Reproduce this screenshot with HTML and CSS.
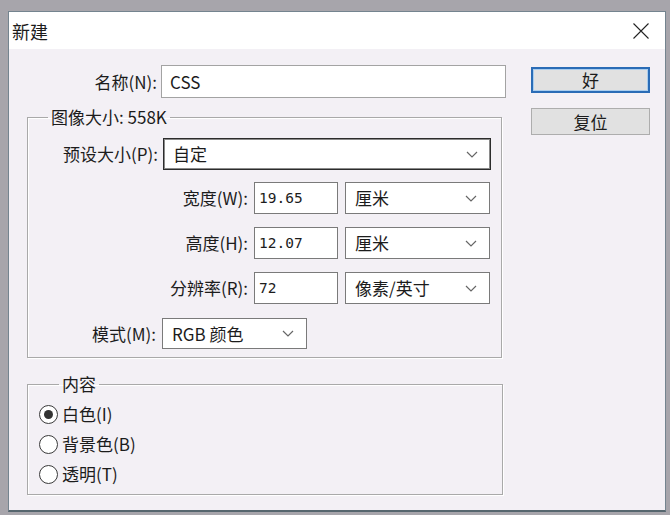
FILE: index.html
```html
<!DOCTYPE html>
<html lang="zh">
<head>
<meta charset="utf-8">
<title>新建</title>
<link rel="stylesheet" href="styles.css">
</head>
<body>
<div class="page">
  <div class="win">
    <div class="titlebar">
      <span class="title">新建</span>
      <svg class="close" width="16" height="16" viewBox="0 0 16 16"><path d="M0.5 0.5 L15.5 15.5 M15.5 0.5 L0.5 15.5" stroke="#222" stroke-width="1.1" fill="none"/></svg>
    </div>
    <div class="content">
      <div class="form">
        <div class="row name-row">
          <label class="lbl lbl-name">名称(N):</label>
          <div class="field name-field">CSS</div>
        </div>

        <fieldset class="group group-size">
          <legend>图像大小: 558K</legend>
          <div class="row preset-row">
            <label class="lbl lbl-preset">预设大小(P):</label>
            <div class="select select-preset dark"><span>自定</span><svg class="chev" width="12" height="7" viewBox="0 0 12 7"><path d="M1 1 L6 6 L11 1" stroke="#666" stroke-width="1.2" fill="none"/></svg></div>
          </div>
          <div class="row dim-row">
            <label class="lbl lbl-dim">宽度(W):</label>
            <div class="field num-field">19.65</div>
            <div class="select unit-select"><span>厘米</span><svg class="chev" width="12" height="7" viewBox="0 0 12 7"><path d="M1 1 L6 6 L11 1" stroke="#666" stroke-width="1.2" fill="none"/></svg></div>
          </div>
          <div class="row dim-row">
            <label class="lbl lbl-dim">高度(H):</label>
            <div class="field num-field">12.07</div>
            <div class="select unit-select"><span>厘米</span><svg class="chev" width="12" height="7" viewBox="0 0 12 7"><path d="M1 1 L6 6 L11 1" stroke="#666" stroke-width="1.2" fill="none"/></svg></div>
          </div>
          <div class="row dim-row">
            <label class="lbl lbl-dim">分辨率(R):</label>
            <div class="field num-field">72</div>
            <div class="select unit-select"><span>像素/英寸</span><svg class="chev" width="12" height="7" viewBox="0 0 12 7"><path d="M1 1 L6 6 L11 1" stroke="#666" stroke-width="1.2" fill="none"/></svg></div>
          </div>
          <div class="row mode-row">
            <label class="lbl lbl-mode">模式(M):</label>
            <div class="select mode-select"><span>RGB 颜色</span><svg class="chev" width="12" height="7" viewBox="0 0 12 7"><path d="M1 1 L6 6 L11 1" stroke="#666" stroke-width="1.2" fill="none"/></svg></div>
          </div>
        </fieldset>

        <fieldset class="group group-content">
          <legend>内容</legend>
          <div class="radio-row"><span class="radio checked"></span><span class="rlabel">白色(I)</span></div>
          <div class="radio-row"><span class="radio"></span><span class="rlabel">背景色(B)</span></div>
          <div class="radio-row"><span class="radio"></span><span class="rlabel">透明(T)</span></div>
        </fieldset>
      </div>
      <div class="side">
        <div class="btn btn-ok"><span>好</span></div>
        <div class="btn"><span>复位</span></div>
      </div>
    </div>
  </div>
</div>
</body>
</html>
```

FILE: styles.css
```css
* { box-sizing: border-box; }
html, body { margin: 0; }
body {
  background: #a7a5ab;
  font-family: "Noto Sans CJK SC", "Noto Sans", sans-serif;
  font-size: 17px;
  color: #1c1c1c;
  width: 670px;
  height: 515px;
  overflow: hidden;
}
.page {
  padding: 11px 4px 0 8px;
}
.win {
  height: 501px;
  border: 1px solid #74848f;
  border-bottom: 2px solid #56666e;
  background: #f3f0f5;
  display: flex;
  flex-direction: column;
}
.titlebar {
  height: 37px;
  flex: none;
  background: #ffffff;
  display: flex;
  align-items: center;
  justify-content: space-between;
  padding: 0 16px 0 3px;
  font-size: 18px;
  line-height: 20px;
}
.content {
  flex: 1;
  display: flex;
}
.form {
  width: 497px;
  padding-top: 16px;
}
.side {
  margin-left: 25px;
  padding-top: 18px;
  display: flex;
  flex-direction: column;
  gap: 15px;
}
.row {
  display: flex;
  align-items: center;
}
.lbl {
  text-align: right;
  line-height: 20px;
  white-space: nowrap;
}
.field, .select {
  background: #ffffff;
  border: 1px solid #7a7a7a;
  display: flex;
  align-items: center;
  line-height: 20px;
}
.name-row .lbl { width: 148px; }
.name-field {
  margin-left: 4px;
  width: 345px;
  height: 33px;
  border-color: #a3a3a3;
  padding-left: 8px;
  font-size: 17px;
}
.group {
  margin: 10px 0 0 18px;
  padding: 0;
  border: 1px solid #a9a9a9;
  box-shadow: inset 1px 1px 0 #ffffff, 1px 1px 0 #ffffff;
  min-width: 0;
}
.group legend {
  margin-left: 20px;
  padding: 0 3px;
  line-height: 18px;
  font-size: 17px;
}
.group-size {
  width: 475px;
  padding-top: 12px;
  padding-bottom: 8px;
}
.select {
  justify-content: space-between;
  padding: 0 12px 0 9px;
}
.select-preset {
  margin-left: 5px;
  width: 328px;
  height: 32px;
}
.select.dark {
  border: 1px solid #2c2c2c;
  box-shadow: inset 0 0 0 1px #8a8a8a;
}
.lbl-preset { width: 130px; }
.dim-row { margin-top: 12px; }
.dim-row + .dim-row { margin-top: 13px; }
.lbl-dim { width: 220px; }
.num-field {
  margin-left: 6px;
  width: 84px;
  height: 32px;
  padding-left: 4px;
  font-family: "DejaVu Sans Mono", monospace;
  font-size: 14.5px;
}
.unit-select {
  margin-left: 7px;
  width: 145px;
  height: 32px;
}
.mode-row { margin-top: 14px; }
.lbl-mode { width: 128px; }
.mode-select {
  margin-left: 6px;
  width: 145px;
  height: 31px;
}
.chev { flex: none; }
.group-content {
  width: 476px;
  margin-top: 17px;
  padding: 6px 0 5px 11px;
}
.radio-row {
  display: flex;
  align-items: center;
  height: 30px;
  gap: 4px;
}
.radio {
  width: 19px;
  height: 19px;
  border-radius: 50%;
  border: 1px solid #3a3a3a;
  background: #ffffff;
  display: flex;
  align-items: center;
  justify-content: center;
}
.radio.checked::after {
  content: "";
  width: 9px;
  height: 9px;
  border-radius: 50%;
  background: #333333;
}
.rlabel {
  line-height: 20px;
  font-size: 17px;
}
.btn {
  width: 119px;
  height: 27px;
  background: #e1e1e1;
  border: 1px solid #adadad;
  display: flex;
  align-items: center;
  justify-content: center;
  line-height: 20px;
}
.btn-ok {
  height: 26px;
  border: 2px solid #2a6cb6;
  box-shadow: inset 0 0 0 1px #a9cdee;
}
```
